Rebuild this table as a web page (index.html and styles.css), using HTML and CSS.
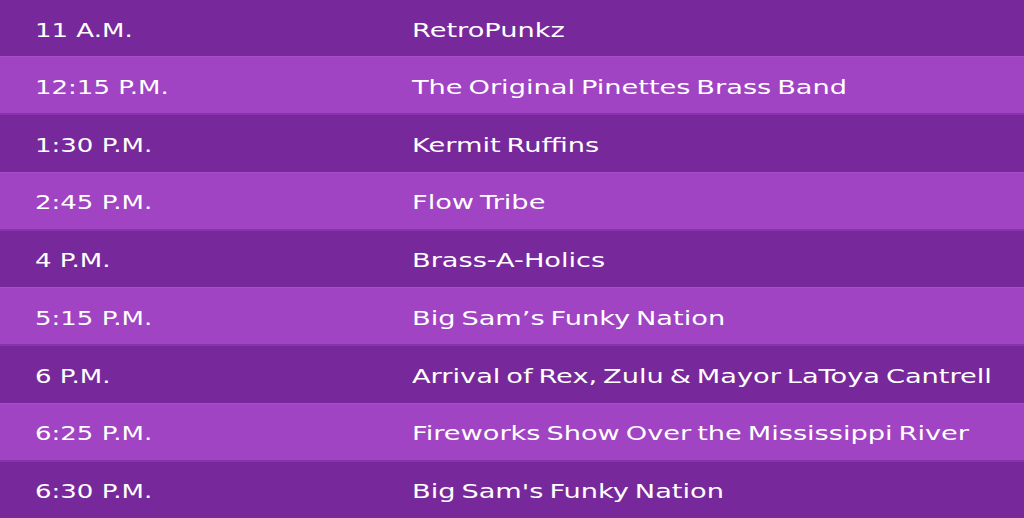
FILE: index.html
```html
<!DOCTYPE html>
<html>
<head>
<meta charset="utf-8">
<link rel="stylesheet" href="styles.css">
</head>
<body>
<div class="schedule">
  <div class="row dark"><span class="time"><span class="txt">11 A.M.</span></span><span class="act"><span class="txt">RetroPunkz</span></span></div>
  <div class="row light"><span class="time"><span class="txt">12:15 P.M.</span></span><span class="act"><span class="txt">The Original Pinettes Brass Band</span></span></div>
  <div class="row dark"><span class="time"><span class="txt">1:30 P.M.</span></span><span class="act"><span class="txt">Kermit Ruffins</span></span></div>
  <div class="row light"><span class="time"><span class="txt">2:45 P.M.</span></span><span class="act"><span class="txt">Flow Tribe</span></span></div>
  <div class="row dark"><span class="time"><span class="txt">4 P.M.</span></span><span class="act"><span class="txt">Brass-A-Holics</span></span></div>
  <div class="row light"><span class="time"><span class="txt">5:15 P.M.</span></span><span class="act"><span class="txt">Big Sam’s Funky Nation</span></span></div>
  <div class="row dark"><span class="time"><span class="txt">6 P.M.</span></span><span class="act"><span class="txt">Arrival of Rex, Zulu &amp; Mayor LaToya Cantrell</span></span></div>
  <div class="row light"><span class="time"><span class="txt">6:25 P.M.</span></span><span class="act"><span class="txt">Fireworks Show Over the Mississippi River</span></span></div>
  <div class="row dark"><span class="time"><span class="txt">6:30 P.M.</span></span><span class="act"><span class="txt">Big Sam's Funky Nation</span></span></div>
</div>
</body>
</html>
```

FILE: styles.css
```css
html, body {
  margin: 0;
  padding: 0;
  background: #77299b;
}
.schedule {
  width: 1024px;
  height: 518px;
  display: flex;
  flex-direction: column;
  overflow: hidden;
}
.row {
  flex: 1 1 0;
  display: flex;
  align-items: center;
  padding-top: 3px;
  box-sizing: border-box;
  color: #ffffff;
  font-family: "DejaVu Sans", sans-serif;
  font-size: 20px;
  line-height: 1;
  white-space: nowrap;
}
.dark {
  background: #77299b;
}
.light {
  background: #a044c4;
  border-top: 1px solid #a74fca;
  border-bottom: 2px solid #8733ad;
}
.time {
  width: 377px;
  padding-left: 35px;
  flex: none;
}
.act {
  flex: 1;
}
.txt {
  display: inline-block;
  transform-origin: left center;
}
.time .txt {
  transform: scaleX(1.3);
}
.act .txt {
  transform: scaleX(1.36);
  word-spacing: -2px;
}
```
